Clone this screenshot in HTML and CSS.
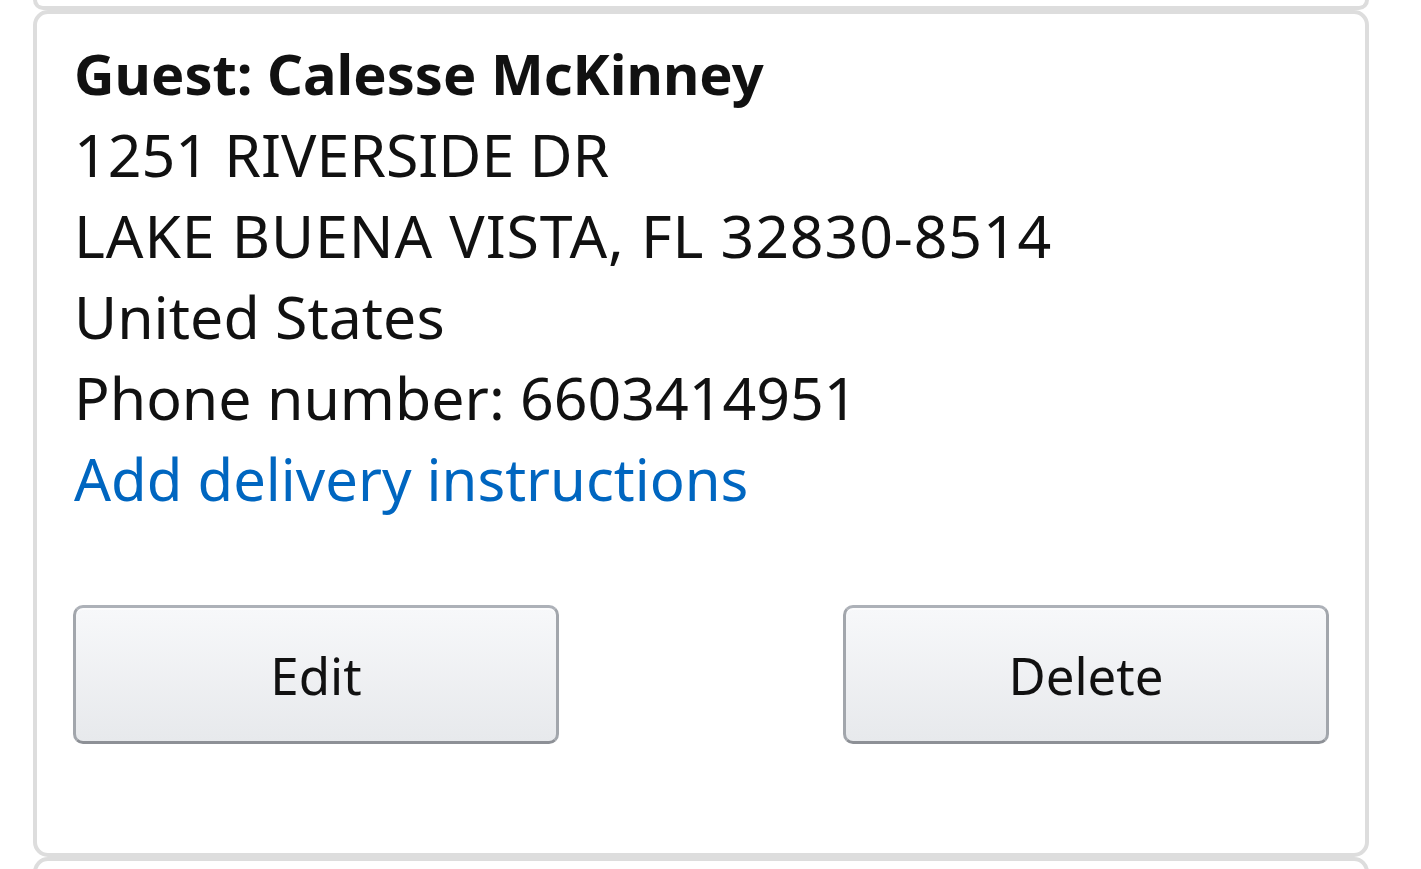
FILE: index.html
```html
<!DOCTYPE html>
<html lang="en">
<head>
<meta charset="utf-8">
<title>Your Addresses</title>
<link rel="stylesheet" href="styles.css">
</head>
<body>
<div class="list">
  <div class="card card-prev"></div>
  <div class="card">
    <div class="addr">
      <div class="name">Guest: Calesse McKinney</div>
      <div class="line">1251 RIVERSIDE DR</div>
      <div class="line city">LAKE BUENA VISTA, FL 32830-8514</div>
      <div class="line">United States</div>
      <div class="line">Phone number: 6603414951</div>
      <a class="link" href="#">Add delivery instructions</a>
    </div>
    <div class="actions">
      <button class="btn" type="button">Edit</button>
      <button class="btn" type="button">Delete</button>
    </div>
  </div>
  <div class="card card-next"></div>
</div>
</body>
</html>
```
FILE: styles.css
```css
html, body {
  margin: 0;
  padding: 0;
  background: #ffffff;
}
body {
  font-family: "Noto Sans", "Open Sans", sans-serif;
  color: #111111;
  height: 869px;
  overflow: hidden;
}
.list {
  width: 1336px;
  margin-left: 33px;
}
.card {
  box-sizing: border-box;
  border: 4px solid #dddddd;
  border-radius: 15px;
  background: #ffffff;
  padding: 19px 36px 109px 36px;
}
.card-prev {
  height: 10px;
  padding: 0;
  border-top: 0;
  border-radius: 0 0 15px 15px;
}
.card-next {
  height: 60px;
  padding: 0;
}
.addr {
  display: flex;
  flex-direction: column;
  align-items: flex-start;
  padding-left: 1px;
}
.name, .line, .link {
  font-size: 59px;
  line-height: 81px;
}
.name {
  font-weight: 700;
  font-size: 56px;
}
.city {
  letter-spacing: 0.9px;
}
.link {
  color: #0066c0;
  text-decoration: none;
  font-size: 58px;
}
.actions {
  display: flex;
  justify-content: space-between;
  margin-top: 86px;
}
.btn {
  box-sizing: border-box;
  width: 486px;
  height: 139px;
  border: 3px solid #a2a6ac;
  border-top-color: #adb1b8;
  border-bottom-color: #8d9096;
  border-radius: 10px;
  background: linear-gradient(to bottom, #f7f8fa, #e7e9ec);
  font-family: "Noto Sans", "Open Sans", sans-serif;
  font-size: 51px;
  color: #111111;
  padding: 0;
  box-shadow: inset 0 2px 0 rgba(255,255,255,0.6);
}
```
